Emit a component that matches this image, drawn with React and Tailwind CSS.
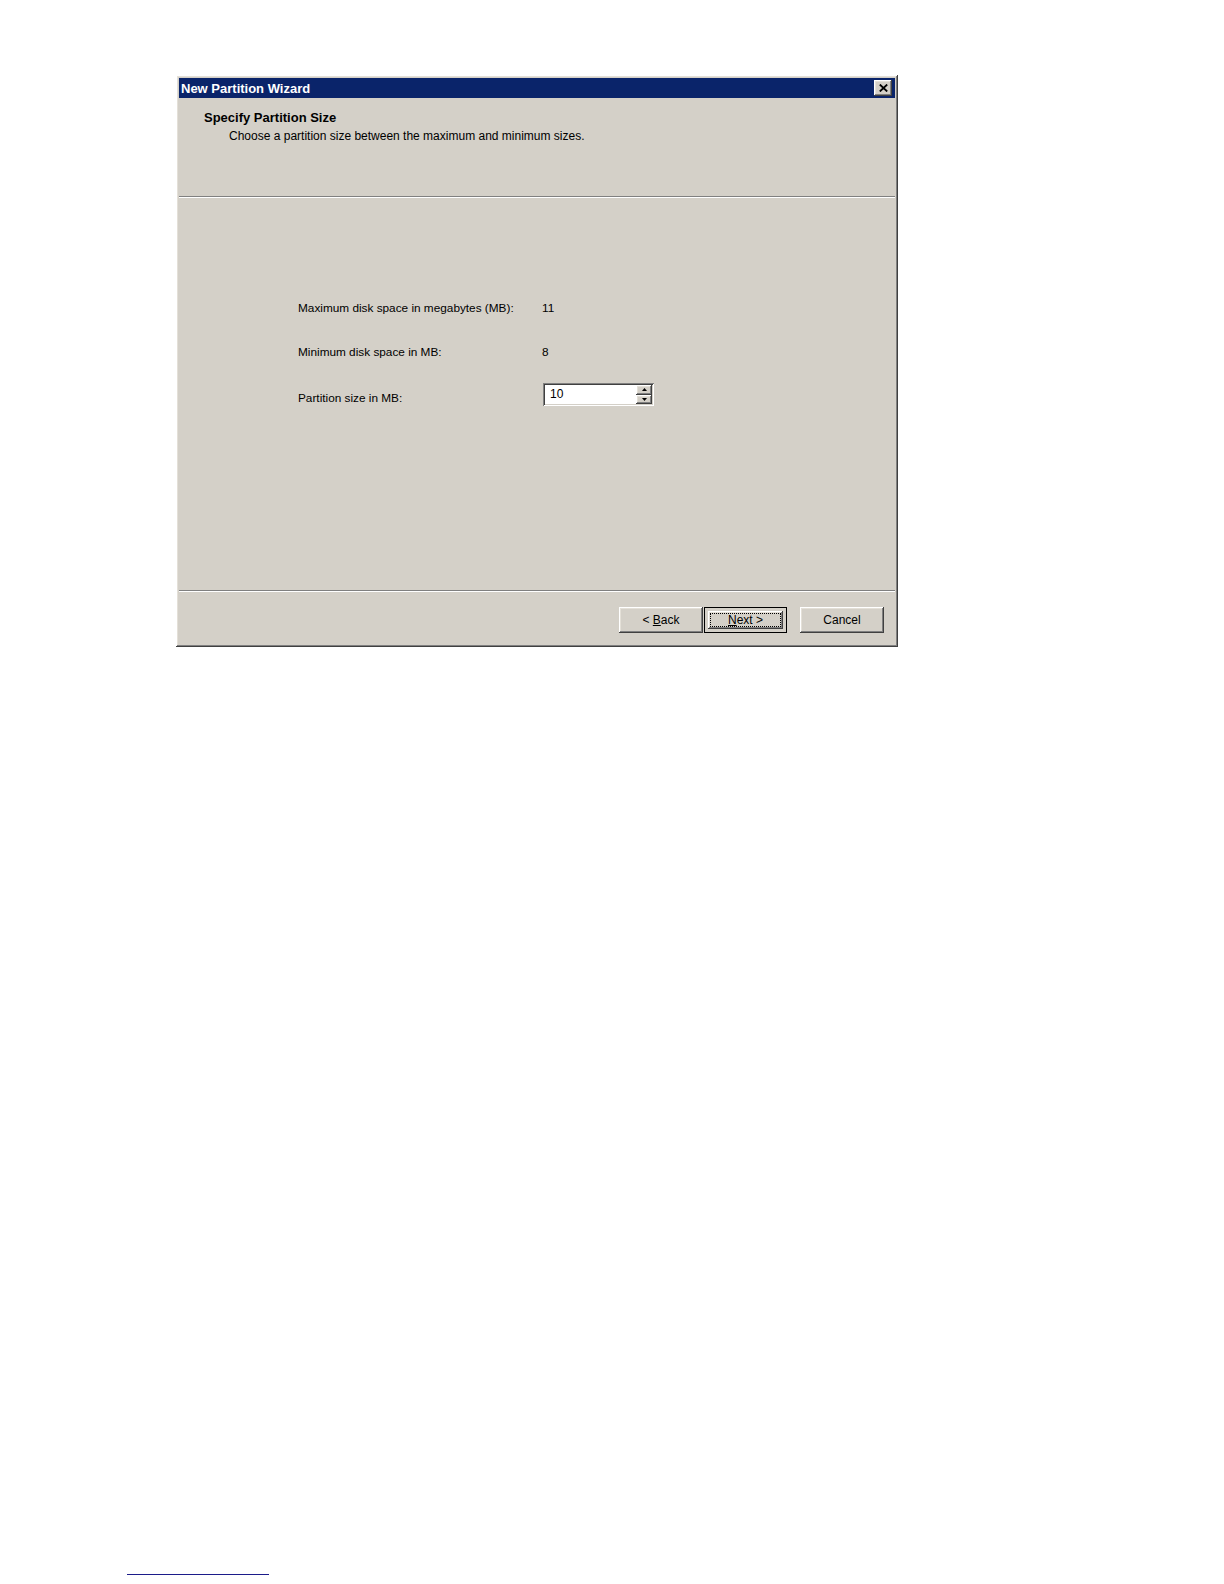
import React from "react";

const font = { fontFamily: '"Liberation Sans", Arial, sans-serif' };

const raised =
  "shadow-[inset_-1px_-1px_#404040,inset_1px_1px_#ffffff,inset_-2px_-2px_#808080,inset_2px_2px_#e4e0d8]";

const Button = ({ children, isDefault }) => (
  <button
    className={
      isDefault
        ? "h-[26px] w-[83px] bg-[#d4d0c8] border border-black p-[3px] text-[12px] text-black"
        : `h-[26px] w-[84px] bg-[#d4d0c8] ${raised} text-[12px] text-black`
    }
  >
    {isDefault ? (
      <div className={`h-full w-full ${raised} p-[2px]`}>
        <div className="h-full w-full border border-dotted border-black flex items-center justify-center leading-none">
          {children}
        </div>
      </div>
    ) : (
      children
    )}
  </button>
);

const SpinBox = ({ value }) => (
  <div className="ml-[3px] h-[23px] w-[111px] bg-white flex shadow-[inset_1px_1px_#808080,inset_-1px_-1px_#ffffff,inset_2px_2px_#404040,inset_-2px_-2px_#d4d0c8] p-[2px]">
    <div className="flex-1 pl-[5px] text-[12px] leading-[19px] text-black">{value}</div>
    <div className="w-[16px] flex flex-col">
      <div className={`flex-1 bg-[#d4d0c8] ${raised} flex items-center justify-center`}>
        <svg width="5" height="3" viewBox="0 0 5 3">
          <path d="M2.5 0 L5 3 L0 3 Z" fill="#000" />
        </svg>
      </div>
      <div className={`flex-1 bg-[#d4d0c8] ${raised} flex items-center justify-center`}>
        <svg width="5" height="3" viewBox="0 0 5 3">
          <path d="M0 0 L5 0 L2.5 3 Z" fill="#000" />
        </svg>
      </div>
    </div>
  </div>
);

const Separator = () => (
  <div className="flex flex-col">
    <div className="h-px bg-[#808080]" />
    <div className="h-px bg-white" />
  </div>
);

export default function App() {
  return (
    <div className="min-h-[1584px] w-[1224px] bg-white pt-[75px]" style={font}>
      <div className={`ml-[176px] w-[722px] h-[572px] bg-[#d4d0c8] p-[3px] flex flex-col ${raised}`}>
        {/* title bar */}
        <div className="h-[20px] bg-[#0a246a] flex items-center justify-between pl-[2px] pr-[3px]">
          <span className="text-white font-bold text-[13px] leading-none">New Partition Wizard</span>
          <div className={`w-[18px] h-[16px] bg-[#d4d0c8] ${raised} flex items-center justify-center`}>
            <svg width="9" height="8" viewBox="0 0 9 8">
              <path d="M0.8 0.5 L8.2 7.5 M8.2 0.5 L0.8 7.5" stroke="#000" strokeWidth="1.8" />
            </svg>
          </div>
        </div>

        {/* header */}
        <div className="h-[98px] pt-[12px] text-black">
          <div className="pl-[25px] text-[13px] font-bold leading-[16px]">Specify Partition Size</div>
          <div className="pl-[50px] mt-[2px] text-[12px] leading-[16px]">
            Choose a partition size between the maximum and minimum sizes.
          </div>
        </div>
        <Separator />

        {/* body */}
        <div className="flex-1 pt-[102px] pl-[119px] text-[11.8px] text-black">
          <div className="flex leading-[16px]">
            <div className="w-[244px]">Maximum disk space in megabytes (MB):</div>
            <div>11</div>
          </div>
          <div className="flex leading-[16px] mt-[28px]">
            <div className="w-[244px]">Minimum disk space in MB:</div>
            <div>8</div>
          </div>
          <div className="flex items-start mt-[23px]">
            <div className="w-[242px] leading-[16px] mt-[7px]">Partition size in MB:</div>
            <SpinBox value="10" />
          </div>
        </div>
        <Separator />

        {/* footer */}
        <div className="h-[52px] pt-[15px] pr-[11px] flex justify-end items-start">
          <Button>
            &lt; <span className="underline">B</span>ack
          </Button>
          <div className="ml-px">
            <Button isDefault>
              <span>
                <span className="underline">N</span>ext &gt;
              </span>
            </Button>
          </div>
          <div className="ml-[13px]">
            <Button>Cancel</Button>
          </div>
        </div>
      </div>

      <div className="ml-[127px] mt-[927px] w-[142px] h-px bg-[#1c1c8a]" />
    </div>
  );
}
